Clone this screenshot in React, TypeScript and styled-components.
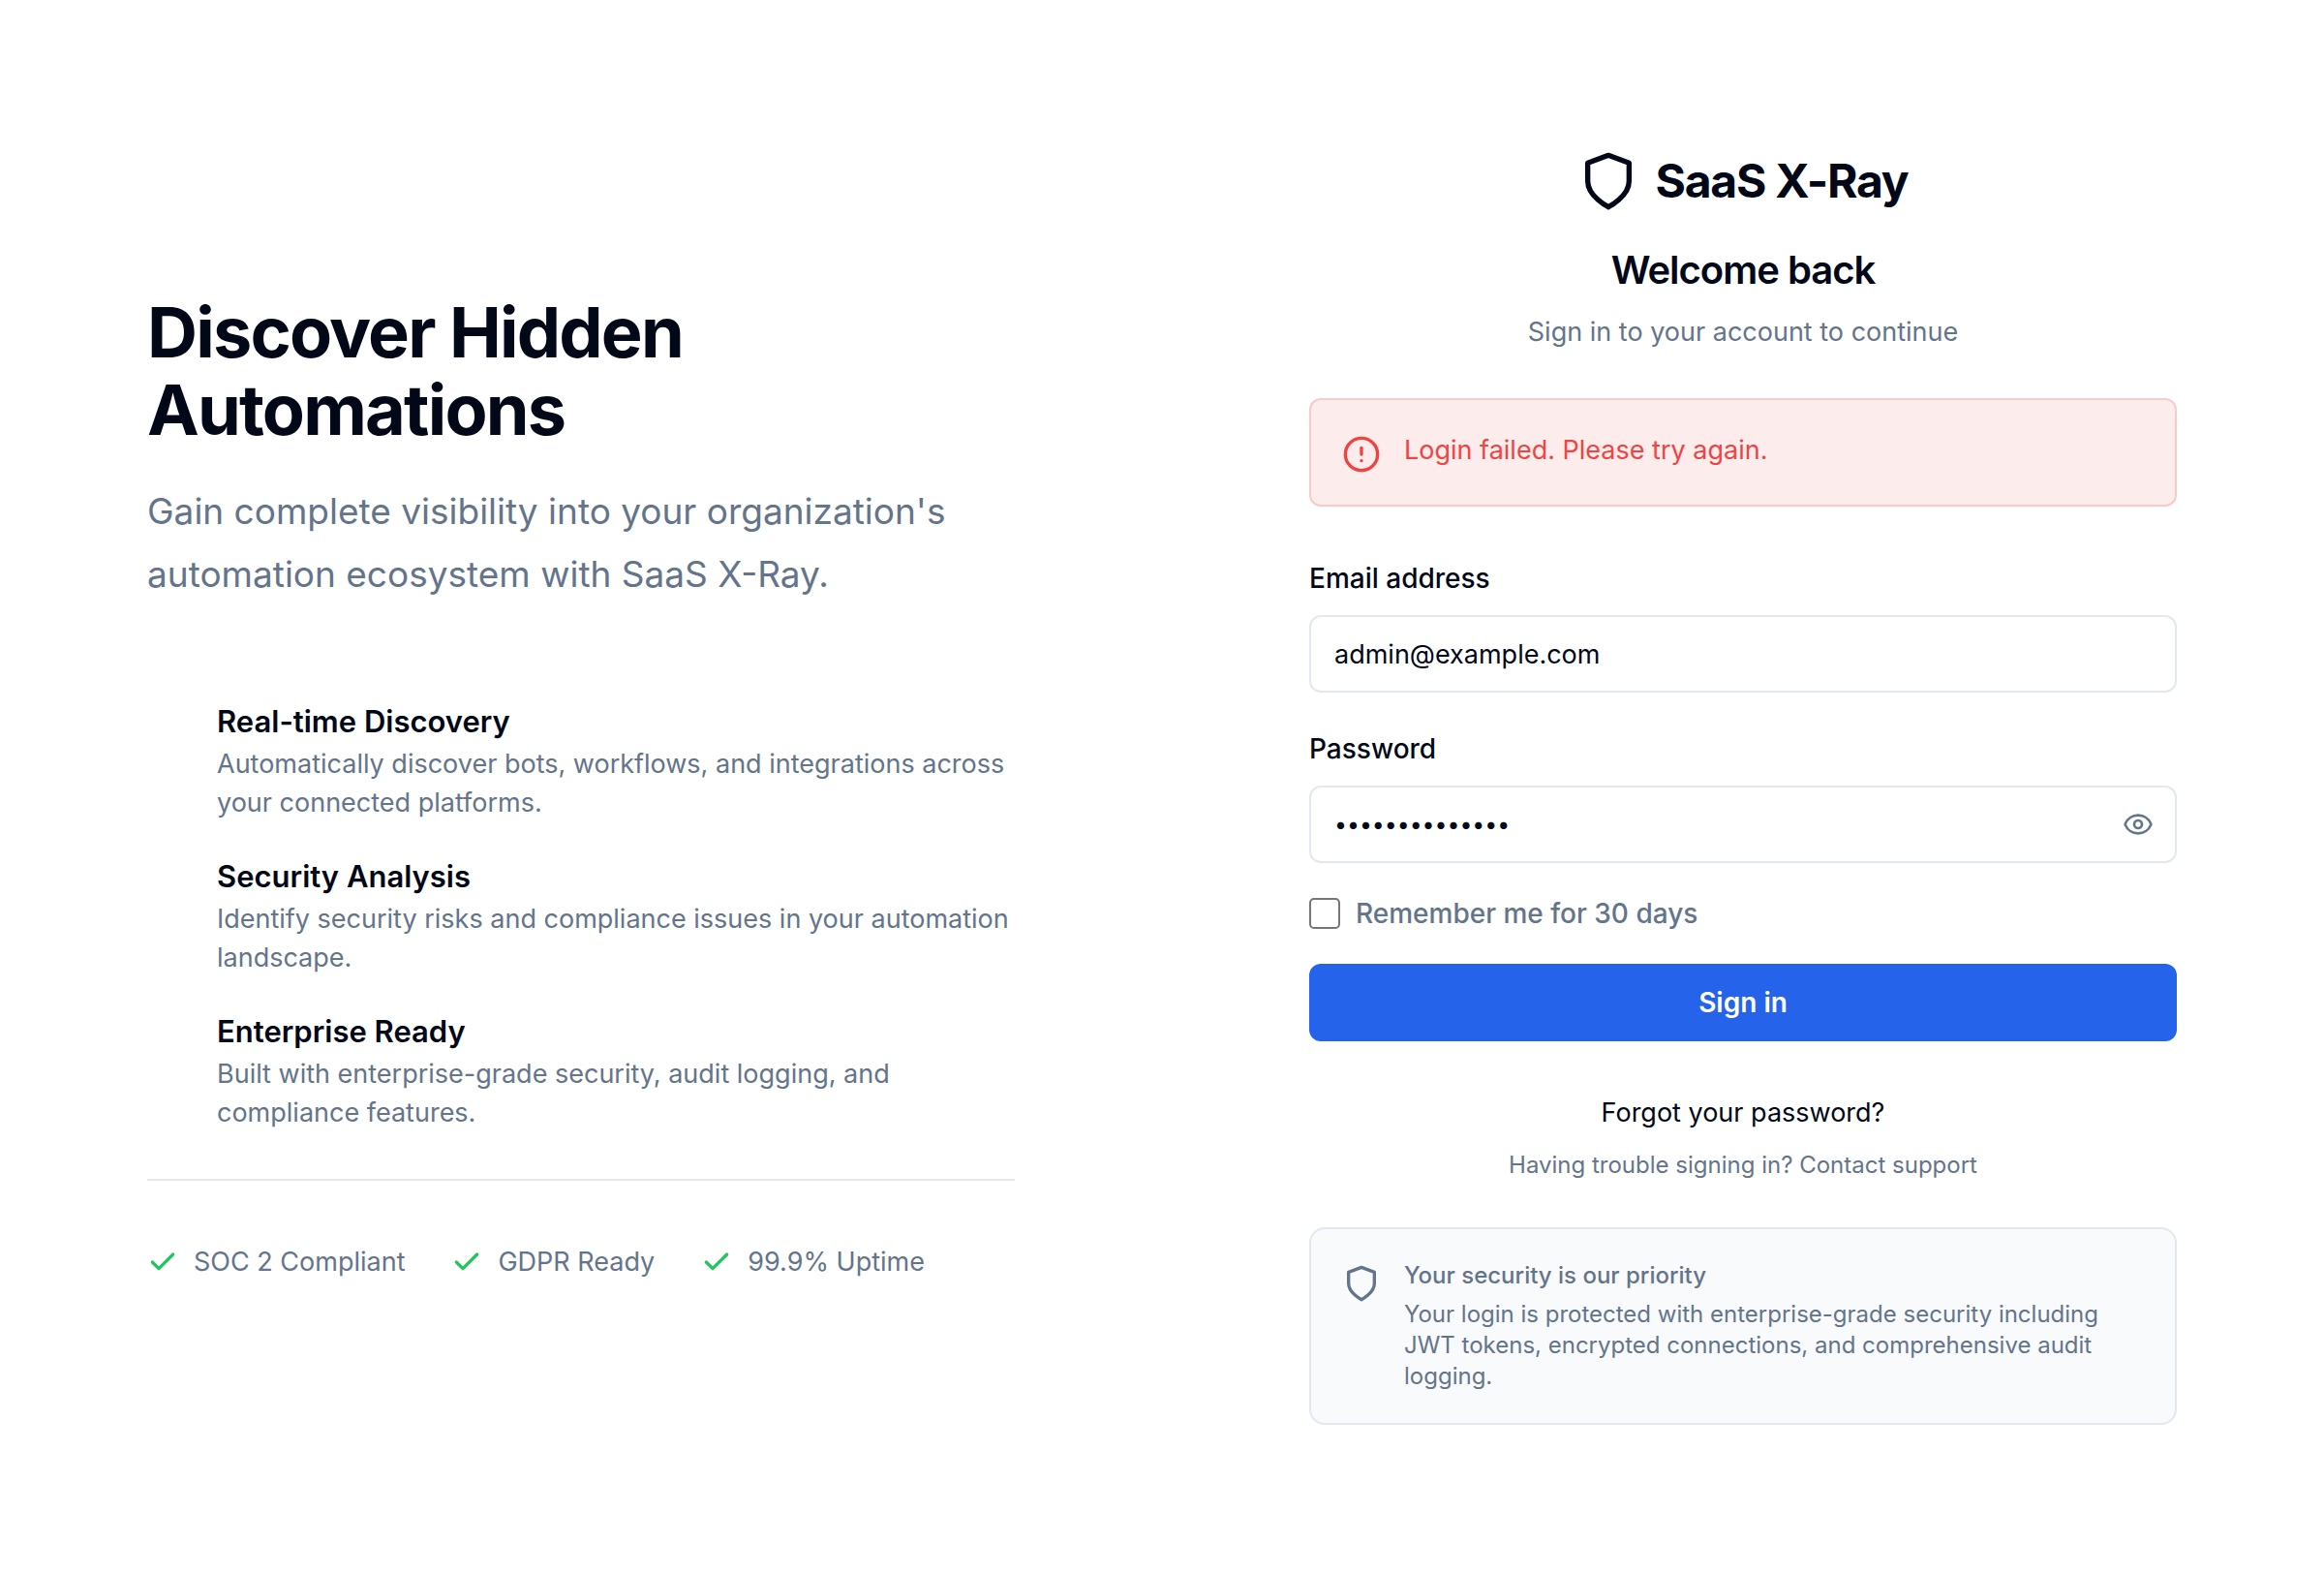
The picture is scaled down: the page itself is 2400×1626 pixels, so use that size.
import React, { useState } from "react";
import styled, { createGlobalStyle } from "styled-components";
import { Check, CircleAlert, Eye, EyeOff } from "lucide-react";

const color = {
  ink: "#020817",
  muted: "#64748b",
  line: "#e2e8f0",
  surface: "#f8fafc",
  primary: "#2563eb",
  success: "#22c55e",
  danger: "#ef4444",
  dangerSurface: "#fdecec",
  dangerLine: "#fac9c9",
};

const GlobalStyle = createGlobalStyle`
  *, *::before, *::after { box-sizing: border-box; }
  body {
    margin: 0;
    background: #fff;
    color: ${color.ink};
    font-family: Inter, "Liberation Sans", sans-serif;
    font-size: 27px;
    line-height: 40px;
    -webkit-font-smoothing: antialiased;
  }
  h1, h2, h3, p, ul { margin: 0; padding: 0; }
  ul { list-style: none; }
  button, input { font: inherit; color: inherit; }
`;

const Page = styled.div`
  display: grid;
  grid-template-columns: 1fr 1fr;
  align-items: center;
  min-height: 100vh;

  @media (max-width: 1400px) {
    grid-template-columns: 1fr;
  }
`;

const Column = styled.div`
  width: 100%;
  max-width: 896px;
  margin: 0 auto;
`;

const Headline = styled.h1`
  font-size: 72px;
  line-height: 80px;
  font-weight: 700;
  letter-spacing: -0.025em;
`;

const Lead = styled.p`
  margin-top: 32px;
  padding-right: 40px;
  font-size: 37px;
  line-height: 65px;
  color: ${color.muted};
`;

const FeatureList = styled.ul`
  display: flex;
  flex-direction: column;
  gap: 32px;
  margin-top: 96px;
  padding-left: 72px;
`;

const FeatureTitle = styled.h3`
  font-size: 31px;
  line-height: 48px;
  font-weight: 600;
`;

const FeatureText = styled.p`
  color: ${color.muted};
`;

const TrustList = styled.ul`
  display: flex;
  flex-wrap: wrap;
  gap: 16px 48px;
  margin-top: 48px;
  padding-top: 64px;
  border-top: 2px solid ${color.line};
  color: ${color.muted};
`;

const TrustItem = styled.li`
  display: flex;
  align-items: center;
  gap: 16px;

  svg { color: ${color.success}; }
`;

const Brand = styled.div`
  display: flex;
  justify-content: center;
  align-items: center;
  gap: 16px;
  font-size: 48px;
  line-height: 64px;
  font-weight: 700;
  letter-spacing: -0.025em;
`;

const Welcome = styled.h2`
  margin-top: 32px;
  font-size: 40px;
  line-height: 56px;
  font-weight: 600;
  letter-spacing: -0.025em;
  text-align: center;
`;

const Subtitle = styled.p`
  margin-top: 16px;
  color: ${color.muted};
  text-align: center;
`;

const Notice = styled.div<{ $tone: "danger" | "muted" }>`
  display: flex;
  align-items: flex-start;
  gap: 24px;
  margin-top: 48px;
  padding: 32px;
  border: 2px solid ${(p) => (p.$tone === "danger" ? color.dangerLine : color.line)};
  border-radius: ${(p) => (p.$tone === "danger" ? "12px" : "16px")};
  background: ${(p) => (p.$tone === "danger" ? color.dangerSurface : color.surface)};
  color: ${(p) => (p.$tone === "danger" ? color.danger : color.muted)};

  > svg { flex: none; margin-top: 4px; }
`;

const SecurityCopy = styled.div`
  display: flex;
  flex-direction: column;
  gap: 8px;
  font-size: 24px;
  line-height: 32px;
`;

const SecurityTitle = styled.p`
  font-weight: 500;
`;

const Form = styled.form`
  display: flex;
  flex-direction: column;
  gap: 32px;
  margin-top: 60px;
`;

const Fields = styled.div`
  display: flex;
  flex-direction: column;
  gap: 44px;
`;

const Field = styled.div`
  display: flex;
  flex-direction: column;
  gap: 24px;
`;

const Label = styled.label`
  font-size: 28px;
  line-height: 28px;
  font-weight: 500;
`;

const InputBox = styled.div`
  display: flex;
  align-items: center;
  height: 80px;
  padding-right: 22px;
  border: 2px solid ${color.line};
  border-radius: 12px;

  &:focus-within { border-color: ${color.primary}; }
`;

const Input = styled.input`
  flex: 1;
  min-width: 0;
  height: 100%;
  padding: 0 24px;
  border: 0;
  outline: 0;
  background: transparent;

  &[type="password"] { font-size: 23px; }
`;

const IconButton = styled.button`
  display: flex;
  padding: 0;
  border: 0;
  background: transparent;
  color: ${color.muted};
  cursor: pointer;
`;

const Remember = styled.label`
  display: flex;
  align-items: center;
  gap: 16px;
  font-size: 28px;
  font-weight: 500;
  color: ${color.muted};
`;

const Checkbox = styled.input`
  appearance: none;
  width: 32px;
  height: 32px;
  margin: 0;
  border: 2px solid #767676;
  border-radius: 5px;
  background: #fff;

  &:checked { background: ${color.primary}; border-color: ${color.primary}; }
`;

const Submit = styled.button`
  height: 80px;
  border: 0;
  border-radius: 12px;
  background: ${color.primary};
  color: #fff;
  font-size: 28px;
  font-weight: 600;
  cursor: pointer;
`;

const Help = styled.div`
  display: flex;
  flex-direction: column;
  align-items: center;
  gap: 18px;
  margin-top: 54px;
`;

const Link = styled.a`
  color: inherit;
  text-decoration: none;

  &:hover { text-decoration: underline; }
`;

const Support = styled.p`
  font-size: 24px;
  line-height: 32px;
  color: ${color.muted};
`;

function Shield({ size }: { size: number }) {
  return (
    <svg
      width={size}
      height={size}
      viewBox="0 0 24 24"
      fill="none"
      stroke="currentColor"
      strokeWidth="2"
      strokeLinecap="round"
      strokeLinejoin="round"
      aria-hidden="true"
    >
      <path d="M12 22s8-4 8-10V5l-8-3-8 3v7c0 6 8 10 8 10" />
    </svg>
  );
}

const features = [
  {
    title: "Real-time Discovery",
    text: "Automatically discover bots, workflows, and integrations across your connected platforms.",
  },
  {
    title: "Security Analysis",
    text: "Identify security risks and compliance issues in your automation landscape.",
  },
  {
    title: "Enterprise Ready",
    text: "Built with enterprise-grade security, audit logging, and compliance features.",
  },
];

const badges = ["SOC 2 Compliant", "GDPR Ready", "99.9% Uptime"];

export default function App() {
  const [email, setEmail] = useState("admin@example.com");
  const [password, setPassword] = useState("SecurePass123!");
  const [visible, setVisible] = useState(false);

  return (
    <>
      <GlobalStyle />
      <Page>
        <Column as="section">
          <Headline>Discover Hidden Automations</Headline>
          <Lead>
            Gain complete visibility into your organization's automation ecosystem with SaaS X-Ray.
          </Lead>
          <FeatureList>
            {features.map((f) => (
              <li key={f.title}>
                <FeatureTitle>{f.title}</FeatureTitle>
                <FeatureText>{f.text}</FeatureText>
              </li>
            ))}
          </FeatureList>
          <TrustList>
            {badges.map((b) => (
              <TrustItem key={b}>
                <Check size={32} strokeWidth={2.5} />
                {b}
              </TrustItem>
            ))}
          </TrustList>
        </Column>

        <Column as="main">
          <Brand>
            <Shield size={64} />
            <span>SaaS X-Ray</span>
          </Brand>
          <Welcome>Welcome back</Welcome>
          <Subtitle>Sign in to your account to continue</Subtitle>

          <Notice $tone="danger" role="alert">
            <CircleAlert size={40} />
            <p>Login failed. Please try again.</p>
          </Notice>

          <Form onSubmit={(e) => e.preventDefault()}>
            <Fields>
              <Field>
                <Label htmlFor="email">Email address</Label>
                <InputBox>
                  <Input
                    id="email"
                    type="email"
                    value={email}
                    onChange={(e) => setEmail(e.target.value)}
                  />
                </InputBox>
              </Field>
              <Field>
                <Label htmlFor="password">Password</Label>
                <InputBox>
                  <Input
                    id="password"
                    type={visible ? "text" : "password"}
                    value={password}
                    onChange={(e) => setPassword(e.target.value)}
                  />
                  <IconButton
                    type="button"
                    aria-label={visible ? "Hide password" : "Show password"}
                    onClick={() => setVisible(!visible)}
                  >
                    {visible ? <EyeOff size={32} /> : <Eye size={32} />}
                  </IconButton>
                </InputBox>
              </Field>
            </Fields>
            <Remember htmlFor="remember">
              <Checkbox id="remember" type="checkbox" />
              Remember me for 30 days
            </Remember>
            <Submit type="submit">Sign in</Submit>
          </Form>

          <Help>
            <Link href="#forgot">Forgot your password?</Link>
            <Support>
              Having trouble signing in? <Link href="#support">Contact support</Link>
            </Support>
          </Help>

          <Notice $tone="muted">
            <Shield size={40} />
            <SecurityCopy>
              <SecurityTitle>Your security is our priority</SecurityTitle>
              <p>
                Your login is protected with enterprise-grade security including JWT tokens,
                encrypted connections, and comprehensive audit logging.
              </p>
            </SecurityCopy>
          </Notice>
        </Column>
      </Page>
    </>
  );
}
